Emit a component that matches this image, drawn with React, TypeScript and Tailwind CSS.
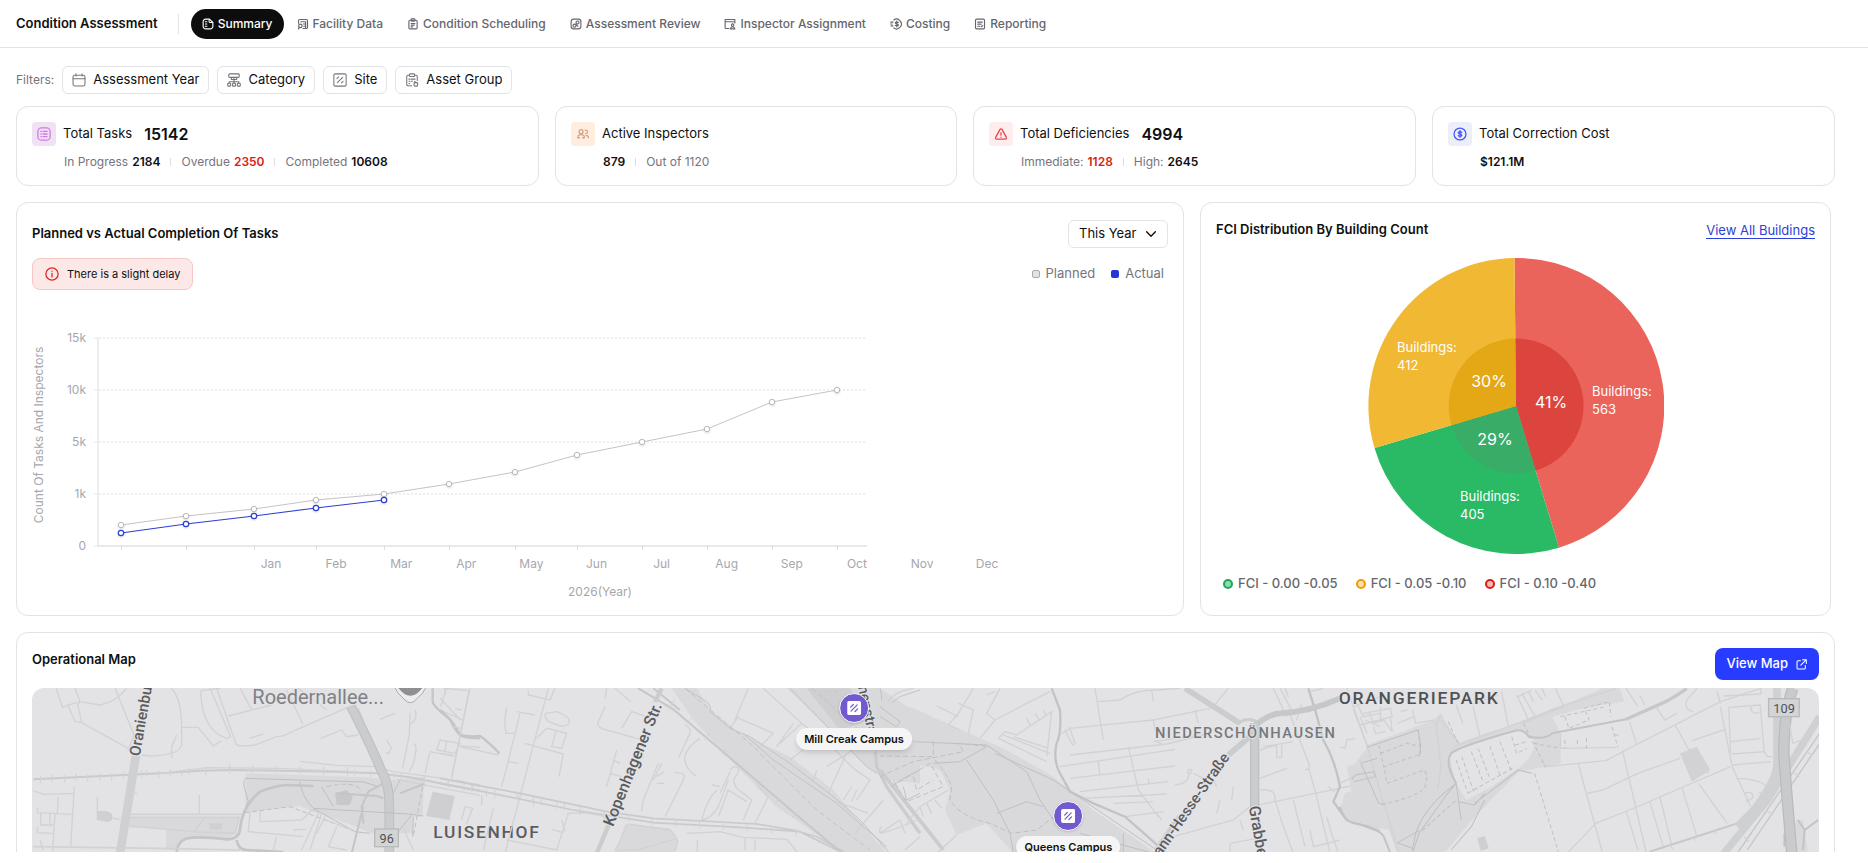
import type { ReactNode } from 'react'

type IconProps = {
    size?:      number
    weight?:    number
    className?: string
    children:   ReactNode
}

const Icon = ({ size = 12, weight = 1.4, className = '', children }: IconProps) => (
    <svg
        width={size}
        height={size}
        viewBox="0 0 16 16"
        fill="none"
        stroke="currentColor"
        strokeWidth={weight}
        strokeLinecap="round"
        strokeLinejoin="round"
        className={`shrink-0 ${className}`}
        aria-hidden="true"
    >
        {children}
    </svg>
)

const tabs = [
    {
        name: 'Summary',
        icon: <>
            <path d="M10 1.5H5A3.5 3.5 0 0 0 1.5 5v6A3.5 3.5 0 0 0 5 14.5h6a3.5 3.5 0 0 0 3.5-3.5V6z" />
            <path d="M9.500 2v2.500a1.500 1.500 0 0 0 1.500 1.500h3M4.500 5h2M4.500 8h2M4.500 11h2" />
        </>,
    },
    {
        name: 'Facility Data',
        icon: <>
            <path d="M2 7V3.500A1.500 1.500 0 0 1 3.500 2h9A1.500 1.500 0 0 1 14 3.500v9a1.500 1.500 0 0 1-1.500 1.500H8" />
            <circle cx="4.500" cy="10.500" r="2.300" />
            <path d="M2 14.500 3 12.500M5 5h6.500v9M8.500 8h3M9 11h2.500" />
        </>,
    },
    {
        name: 'Condition Scheduling',
        icon: <>
            <rect x="2.500" y="3" width="11" height="11.500" rx="1.500" />
            <rect x="5.500" y="1.200" width="5" height="3" rx="1" />
            <path d="M5.500 7.500h5M5.500 9.700h4M5.500 11.900h2" />
        </>,
    },
    {
        name: 'Assessment Review',
        icon: <>
            <rect x="1.500" y="1.500" width="13" height="13" rx="3.500" />
            <circle cx="10" cy="6" r="2" />
            <circle cx="6" cy="10.200" r="2" />
            <path d="m7.500 8.700 1.200-1.200M10.500 11 8.500 9" />
        </>,
    },
    {
        name: 'Inspector Assignment',
        icon: <>
            <path d="M6.500 14H2.500A1 1 0 0 1 1.500 13V2h13v4.500M1.500 5h13" />
            <circle cx="11.500" cy="9.500" r="1.600" />
            <path d="M8.500 14.500c.3-2 1.500-2.800 3-2.800s2.700.8 3 2.800z" />
        </>,
    },
    {
        name: 'Costing',
        icon: <>
            <path d="M5 2.600a6.500 6.500 0 1 1 0 10.800M1 5.500h3M.8 8h2M1.500 10.500h2.500" />
            <path d="M11 6.200c-.3-.7-1-1-1.900-1-1.100 0-1.900.5-1.900 1.400 0 1.900 4 .9 4 2.800 0 .9-.8 1.400-2 1.400-1 0-1.800-.4-2.100-1.100M9.100 4.200v7.600" />
        </>,
    },
    {
        name: 'Reporting',
        icon: <>
            <rect x="2" y="1.500" width="12" height="13" rx="1.500" />
            <path d="M5 5.500h6M5 8.200h4.500M5 11h2.500M9.500 10.800l.8.800 1.400-1.600" />
        </>,
    },
]

const filters = [
    {
        name: 'Assessment Year',
        icon: <>
            <rect x="1.200" y="2.500" width="13.600" height="12.300" rx="2" />
            <path d="M1.200 6.500h13.600M4.500 1v2.500M11.500 1v2.500" />
        </>,
    },
    {
        name: 'Category',
        icon: <>
            <rect x="2" y="1" width="12" height="4" rx="1" />
            <rect x=".8" y="11.800" width="3.400" height="3.200" rx=".8" />
            <rect x="6.300" y="11.800" width="3.400" height="3.200" rx=".8" />
            <rect x="11.800" y="11.800" width="3.400" height="3.200" rx=".8" />
            <path d="M8 5v6.800M2.500 11.800V10h11v1.800M5 5.500v2h6v-2" />
        </>,
    },
    {
        name: 'Site',
        icon: <>
            <rect x="1" y="1" width="14" height="14" rx="1.500" />
            <path d="m4.500 6.500 2-2M5 11l6-6M9.500 11.500l2-2" />
        </>,
    },
    {
        name: 'Asset Group',
        icon: <>
            <path d="M7.500 14.500h-4A1.500 1.500 0 0 1 2 13V4a1.500 1.500 0 0 1 1.500-1.500H5M11 2.500h1.500A1.500 1.500 0 0 1 14 4v4.500" />
            <rect x="5" y="1" width="6" height="3" rx="1" />
            <rect x="10.300" y="11" width="4.200" height="4" rx="1" />
            <path d="M4.500 7h1M7 7h4.500M4.500 9.500h1M7 9.500h1.500M4.500 12h1M11 9.500l1.500 1.500" />
        </>,
    },
]

type Detail = { label?: string; value?: string; alert?: boolean }

type StatProps = {
    title:    string
    total?:   string
    tone:     string
    icon:     ReactNode
    details:  Detail[]
}

const stats: StatProps[] = [
    {
        title: 'Total Tasks',
        total: '15142',
        tone: 'bg-[#f1e1f5] text-[#cf7be6]',
        icon: <>
            <rect x="1" y="1" width="14" height="14" rx="4" />
            <path d="M4.500 5h.5M7 5h4.500M4.500 8h.5M7 8h4.500M4.500 11h.5M7 11h4.500" />
        </>,
        details: [
            { label: 'In Progress', value: '2184' },
            { label: 'Overdue', value: '2350', alert: true },
            { label: 'Completed', value: '10608' },
        ],
    },
    {
        title: 'Active Inspectors',
        tone: 'bg-[#ffeee0] text-[#dda283]',
        icon: <>
            <circle cx="5.800" cy="5.300" r="2.200" />
            <path d="M2 12.300c0-2.300 1.600-3.500 3.800-3.500s3.800 1.200 3.800 3.500H7.500M2 12.300h2M10.500 3.800a1.900 1.900 0 1 1 .7 3.600M11.500 9.500c1.600.2 2.700 1.200 2.700 2.800" />
        </>,
        details: [{ value: '879' }, { label: 'Out of 1120' }],
    },
    {
        title: 'Total Deficiencies',
        total: '4994',
        tone: 'bg-[#ffecec] text-[#e5484d]',
        icon: <>
            <path d="M6.900 2.700 1.900 11.800a1.300 1.300 0 0 0 1.100 2h10a1.300 1.300 0 0 0 1.100-2L9.100 2.700a1.300 1.300 0 0 0-2.200 0z" />
            <path d="M8 6.500v2.800M8 11.500v.1" />
        </>,
        details: [
            { label: 'Immediate:', value: '1128', alert: true },
            { label: 'High:', value: '2645' },
        ],
    },
    {
        title: 'Total Correction Cost',
        tone: 'bg-[#eceef8] text-[#4557ff]',
        icon: <>
            <circle cx="8" cy="8" r="6.800" />
            <path d="M10 6.300c-.3-.7-1.100-1-2-1-1.100 0-2 .5-2 1.300 0 1.800 4 1 4 2.800 0 .8-.9 1.300-2 1.300-.9 0-1.700-.4-2-1M8 4.300v7.400" />
        </>,
        details: [{ value: '$121.1M' }],
    },
]

const StatCard = ({ title, total, tone, icon, details }: StatProps) => (
    <div className="h-20 rounded-xl border border-[#e2e3e7] px-[15px] pt-[15px]">
        <div className="flex h-6 items-center">
            <span className={`mr-[7px] flex size-6 items-center justify-center rounded ${tone}`}>
                <Icon size={14} weight={1.500}>{icon}</Icon>
            </span>
            <span className="text-[13px]">{title}</span>
            {total && <span className="ml-3 text-base font-semibold">{total}</span>}
        </div>
        <div className="mt-2 flex h-4 items-center pl-8 text-xs">
            {details.map((item, i) => (
                <div key={i} className="flex items-center">
                    {i > 0 && <span className="mx-2.5 h-2 w-px bg-[#dcdde1]" />}
                    {item.label && <span className="text-[#74757d]">{item.label}</span>}
                    {item.value && (
                        <span className={`font-semibold ${item.label ? 'ml-1' : ''} ${item.alert ? 'text-[#dc1c13]' : ''}`}>
                            {item.value}
                        </span>
                    )}
                </div>
            ))}
        </div>
    </div>
)

const planned = [
    [89, 225], [154, 216], [222, 209], [284, 200], [352, 194], [417, 184],
    [483, 172], [545, 155], [610, 142], [675, 129], [740, 102], [805, 90],
]
const actual = [[89, 233], [154, 224], [222, 216], [284, 208], [352, 200]]
const months = ['Jan', 'Feb', 'Mar', 'Apr', 'May', 'Jun', 'Jul', 'Aug', 'Sep', 'Oct', 'Nov', 'Dec']
const levels = ['15k', '10k', '5k', '1k', '0']

const CompletionChart = () => (
    <svg viewBox="0 0 1136 305" className="block w-full text-xs" fill="#a6a7ad" role="img" aria-label="Planned vs actual completion of tasks">
        {levels.map((level, i) => (
            <g key={level}>
                <text x="54" y={42 + i * 52} textAnchor="end">{level}</text>
                <path d={`M62 ${38 + i * 52}h4`} stroke="#e4e5e9" />
                {i < 4 && <path d={`M67 ${38 + i * 52}H835`} stroke="#e9e9ec" strokeWidth="1.500" strokeDasharray="2 2" />}
            </g>
        ))}
        <path d="M66 37.500V246" stroke="#e9e9ec" strokeWidth="1.500" />
        <path d="M65 246H835" stroke="#e9e9ec" strokeWidth="2" />
        {planned.map(([x]) => <path key={x} d={`M${x + 0.500} 246v4`} stroke="#dcdde1" />)}
        <text x="8" y="135" textAnchor="middle" transform="rotate(-90 8 135)" dominantBaseline="middle">Count Of Tasks And Inspectors</text>
        {months.map((month, i) => (
            <text key={month} x={239 + i * 65.100} y="268" textAnchor="middle">{month}</text>
        ))}
        <text x="568" y="296" textAnchor="middle">2026(Year)</text>
        <polyline points={planned.join(' ')} fill="none" stroke="#c4c4c7" />
        <polyline points={actual.join(' ')} fill="none" stroke="#2d3ed6" strokeWidth="1.200" />
        {planned.map(([x, y]) => (
            <circle key={x} cx={x} cy={y} r="2.700" fill="white" stroke="#b9b9bd" className="drop-shadow-[0_1px_1px_rgba(0,0,0,0.15)]" />
        ))}
        {actual.map(([x, y]) => (
            <circle key={x} cx={x} cy={y} r="2.700" fill="white" stroke="#2d3ed6" strokeWidth="1.200" className="drop-shadow-[0_1px_1px_rgba(0,0,0,0.15)]" />
        ))}
    </svg>
)

const BuildingPie = () => (
    <svg viewBox="0 0 296 296" className="block size-[296px] text-[13px]" fill="white" role="img" aria-label="FCI distribution by building count">
        <path d="M148 148 146.500 0A148 148 0 0 1 191 289.700z" fill="#ea645b" />
        <path d="M148 148 191 289.700A148 148 0 0 1 6.500 190z" fill="#2aba66" />
        <path d="M148 148 6.500 190A148 148 0 0 1 146.500 0z" fill="#f0b833" />
        <path d="M148 148 147.300 80.500A67.500 67.500 0 0 1 167.600 212.600z" fill="#dc443e" />
        <path d="M148 148 167.600 212.600A67.500 67.500 0 0 1 83.500 167.200z" fill="#39ac68" />
        <path d="M148 148 83.500 167.200A67.500 67.500 0 0 1 147.300 80.500z" fill="#e4a715" />
        <text x="29" y="94">Buildings:</text>
        <text x="29" y="112">412</text>
        <text x="224" y="138">Buildings:</text>
        <text x="224" y="156">563</text>
        <text x="92" y="243">Buildings:</text>
        <text x="92" y="261">405</text>
        <g className="text-base" textAnchor="middle">
            <text x="121" y="129">30%</text>
            <text x="183" y="150">41%</text>
            <text x="127" y="187">29%</text>
        </g>
    </svg>
)

const ranges = [
    { name: 'FCI - 0.00 -0.05', dot: 'border-[#22a55a] bg-[#86e0ad]' },
    { name: 'FCI - 0.05 -0.10', dot: 'border-[#f09a0c] bg-[#ffe1a3]' },
    { name: 'FCI - 0.10 -0.40', dot: 'border-[#dc1c13] bg-[#f9b9b6]' },
]

// Greyscale street map. Each tile is drawn on its own grid, three units to a pixel.
const StreetMap = () => (
    <svg viewBox="0 0 1787 400" preserveAspectRatio="xMidYMin slice" className="block h-full w-full" fill="none" stroke="#d2d2d5" strokeWidth="4" aria-hidden="true">
        {/* west */}
        <g transform="translate(-32 -68) scale(.33333)">
            <g fill="#d9d9db" stroke="none">
                <path d="M738 460 1100 472 1180 480 1272 470 1268 590 1240 590 1238 640 1115 640 1040 610 930 570 900 558 735 578z" />
                <path d="M388 592 718 592 705 640 680 660 560 650 528 690 498 690V628L385 622z" />
                <path d="M1298 515 1365 528 1348 600 1278 588z" fill="#cfcfd1" />
                <path d="M1005 520 1040 510 1058 530 1050 555 1010 555z" fill="#c8c8ca" />
                <path d="M290 573h28q20 5 20 18t-18 15l-30-6zM628 610h38v18h-38z" fill="#d0d0d3" />
            </g>
            <path d="M168 205 188 262 205 255 240 245 300 255Q350 245 380 205M225 205 240 245 233 255 245 305M205 258 225 305 245 308 385 385M345 205 402 345 385 390" />
            <path d="M515 205Q545 240 545 320V375Q540 405 450 408L425 405M545 322H595L640 378 665 362M530 345 515 380V415M602 212 660 205M602 212Q605 330 680 355L692 350 630 205" />
            <path d="M650 205 708 372Q715 382 765 375L830 350Q850 350 870 338L1048 260M685 288 815 255M720 205 755 268M860 210 908 312M895 205 980 270M748 355 790 342" />
            <path d="M962 355 1025 330 1040 350 1075 345M1140 298 1185 280M1090 300 1075 265M1160 360 1175 385 1160 402 1170 398M1230 280 1228 345 1208 445M1245 270Q1255 300 1230 312M1240 372Q1256 375 1240 430L1228 455" />
            <path d="M1340 205 1322 260M1410 205 1355 470M1320 360 1380 370 1365 400 1310 390zM1340 362 1335 395M1290 395 1275 460M1290 395 1365 410M1322 270 1388 300M1380 378 1440 382M1370 480 1440 500" />
            <path d="M1298 205V245Q1300 260 1350 298 1370 345 1390 350T1440 355" stroke="#c4c5c7" strokeWidth="7" />
            <path d="M100 478 370 465 480 460 600 452 700 450 1000 455 1130 460 1230 472 1320 490 1440 512" stroke="#c9cacc" strokeWidth="6" />
            <path d="M480 460 620 443 840 445 1060 455M900 424 1010 436 1130 440 1180 455 1330 475 1440 495M1190 478 1300 500 1440 526" />
            <path d="M122 468V490M157 463V486M194 465V488M229 460V483M263 463V485M300 459V482M335 460V483M371 455V477M425 450V472M440 450V470M477 453V474M511 447V468M546 450V470M567 445V466M617 443V466M689 432V462M759 435V460M830 437V460M900 437V463M971 440V467M1042 442V467M1064 446V468M1112 450V475M1182 460V478M1202 460V480M1273 465V500M1345 478V502M1418 490V512" strokeWidth="3" />
            <path d="M1052 258Q1120 390 1145 455 1168 490 1168 560V700" stroke="#bdbec0" strokeWidth="29" />
            <path d="M1052 258Q1120 390 1145 455 1168 490 1168 560V700" stroke="#cbccce" strokeWidth="23" />
            <path d="M408 405 370 640 360 700" stroke="#cfd0d2" strokeWidth="26" />
            <path d="M735 478Q728 485 735 510L745 545 730 578M735 475 1090 486 1130 498M900 485Q905 530 940 565L1065 635 1110 640M965 500 1000 560M1180 520 1200 480M940 565 1240 583 1270 588M1235 585 1190 640M1240 590 1238 650" stroke="#bebfc1" strokeWidth="3" />
            <path d="M735 578 870 560 1060 632M980 500Q1060 480 1085 512M1268 500 1240 648" stroke="#bebfc1" strokeWidth="3" strokeDasharray="14 8" />
            <path d="M530 700Q530 668 560 655 600 648 680 658 715 658 720 630 725 560 780 515 820 498 860 495L940 498M710 660Q715 690 740 690L850 696" stroke="#c4c5c7" strokeWidth="8" />
            <path d="M1010 520 1130 528 1150 535M1150 490 1105 515 1085 560 1090 610M1200 520 1272 492M1055 700 1090 560" stroke="#c4c5c7" strokeWidth="6" />
            <path d="M388 583 725 583M388 592 718 592 705 640 590 636 560 633 388 618M610 598 582 635M100 680 530 686 720 690" strokeWidth="5" />
            <path d="M100 512 130 523 220 520M223 500 212 680M175 530 172 580M112 563V578L215 583M122 580V615H160M150 580V620M112 620V638L158 640M165 580 158 695M120 660 130 690M292 530V575M340 595 362 598M598 525V580M412 520H400" />
            <path d="M750 575 745 635 910 650M780 572V605L905 600 935 570 965 580 930 690M955 580 905 690M880 630 920 628M975 590 950 640M980 600 1055 630M830 650 820 690M1010 620 985 680 1040 690M1385 600 1395 560 1418 565 1400 612M1210 625 1240 690" />
            <g fill="#5b5c5f" stroke="#e3e3e5" strokeWidth="6" paintOrder="stroke" className="font-[Roboto]">
                <text x="757" y="252" fontSize="60" fill="#808184">Roedernallee...</text>
                <text x="419" y="410" fontSize="46" fontWeight="500" transform="rotate(-80 419 410)">Oranienburger Str.</text>
                <text x="1300" y="653" fontSize="52" fontWeight="500" className="tracking-widest">LUISENHOF</text>
            </g>
            <path d="M1180 195Q1190 220 1215 240 1231 256 1247 240 1272 220 1282 195z" fill="#ececee" stroke="#a9aaac" strokeWidth="3" />
            <path d="M1192 200Q1231 255 1270 200z" fill="#8e8f92" stroke="none" />
            <rect x="1124" y="627" width="71" height="53" fill="#d3d4d6" stroke="#b9babc" />
            <text x="1160" y="668" fontSize="38" textAnchor="middle" fill="#505154" stroke="none" className="font-[Roboto]">96</text>
        </g>
        {/* centre west */}
        <g transform="translate(408 -68) scale(.33333)">
            <g fill="#d9d9db" stroke="none">
                <path d="M695 205 770 205 810 270 900 340 1050 410 1180 510 1340 700H1210L1140 650 1010 560 900 450 760 300z" />
                <path d="M1040 205H1320L1440 285V490L1340 480 1280 440 1180 340z" />
                <path d="M555 612 690 625 712 660 705 700H525z" />
                <path d="M1100 205H1230L1290 300 1200 330z" fill="#cfcfd1" />
                <path d="M1320 205 1440 260V205z" fill="#e3e3e5" />
            </g>
            <path d="M0 270Q40 300 60 345 90 352 120 348 145 365 178 400" stroke="#c4c5c7" strokeWidth="7" />
            <path d="M10 205 87 212 35 475M0 235 62 300M45 265 65 270M60 380 175 405M15 205V225M0 400 40 405M40 320 65 325" />
            <path d="M325 205 195 700M265 212V225L330 240 345 205M240 280 208 410 185 500M200 262Q190 300 198 340H222M230 275 285 285M205 425 235 430M255 370 370 402 357 470M290 355 320 325 380 340 365 385 335 380 348 335M318 280 350 275Q390 290 388 305T360 318L325 305Q310 290 318 280" />
            <path d="M500 205 495 235M495 260 473 310Q475 325 500 330L600 358M525 205 572 245M545 325 575 275 620 290M530 390 500 500M520 420 540 430M512 460 545 470M655 430 610 540 605 575M650 470 672 455M650 490 672 490M665 430 640 480M705 458Q740 455 730 480L675 590M735 315Q760 325 745 350L715 415M780 355Q740 380 735 410 730 440 768 468" />
            <path d="M815 495 840 500M870 450 880 440Q905 440 890 465L880 480 890 505 935 540 910 600M865 480 835 560Q810 600 785 600 800 540 830 510M955 480V500L985 530 945 610M835 590 865 510 920 545M870 455 840 520" />
            <path d="M885 300 925 205M890 292 1000 340 955 385M970 205 1085 310 1020 370M1060 310 1010 380M870 325 895 290M1085 310 1130 345M1140 350 1050 420M1130 450 1120 480M1165 370 1240 445M1160 440 1270 370M1220 400 1165 520M1240 445 1290 480 1250 540M1190 545 1285 580M1235 500 1210 540M1250 510 1235 545M1330 540 1245 640M1325 620Q1310 640 1330 638 1390 620 1430 600M1395 690 1440 650" />
            <path d="M0 475 240 520 500 575 640 595 950 612 1060 630 1130 650 1220 700M0 490 130 515 400 570 640 608 900 622 1080 635 1210 700" stroke="#c9cacc" strokeWidth="5" />
            <path d="M24 475V498M72 492V515M95 495V515M139 507V530M164 510V535M232 513V535M280 530V560M303 537V558M351 545V568M373 545V570M419 560V585M493 575V600M568 582V605M637 592V615M708 598V622M779 602V625M850 607V630M921 613V635M994 617V640M1068 625V648M1150 650 1135 668M1190 665 1172 685" strokeWidth="3" />
            <path d="M595 205 700 268 860 405 1070 585 1200 695M640 205 720 270" stroke="#c6c7c9" strokeWidth="6" />
            <path d="M665 220 640 250M705 238 685 270M756 292 738 312M808 340 793 360M860 387 846 405M914 433 898 452M966 482 952 500M1020 530 1006 550M1072 575 1057 594M1125 632 1112 652" strokeWidth="3" />
            <path d="M735 205 800 245Q815 260 810 275L870 325 930 350 1050 430 1180 530 1260 600 1350 700M910 340 1000 420 1190 550 1340 680M1050 205 1280 440 1310 460" stroke="#c2c3c5" strokeWidth="3" />
            <path d="M735 205 930 370 1130 570 1290 690M1115 205 1280 350M1320 430 1345 405 1440 415M1320 470 1440 420M1185 210 1240 260" stroke="#c2c3c5" strokeWidth="3" strokeDasharray="16 9" />
            <path d="M1300 330 1310 440 1340 500 1440 640" stroke="#cbccce" strokeWidth="10" />
            <path d="M1320 205Q1330 240 1320 260L1385 300Q1380 320 1350 325M1320 290 1440 285M1330 270 1380 230 1440 210M1360 480 1380 520M1350 500 1400 470 1440 450M1390 500 1400 540 1440 520" stroke="#c2c3c5" strokeWidth="3" />
            <path d="M665 205 645 245M508 610 470 700" stroke="#cbccce" strokeWidth="13" />
            <path d="M565 612 690 630Q715 655 712 670L705 692M525 692 562 615M525 692 600 688 710 655M740 640 840 635 910 652 1040 658 1075 700M772 660V700M915 655V690M945 658V690M125 525V555M200 660 350 690 385 580 430 578 500 590M335 628 370 638M160 565 130 690M365 600 375 635" />
            <g fill="#5b5c5f" stroke="#e3e3e5" strokeWidth="6" paintOrder="stroke" className="font-[Roboto]">
                <text x="519" y="622" fontSize="48" fontWeight="500" transform="rotate(-68 519 622)">Kopenhagener Str.</text>
                <text x="1254" y="200" fontSize="44" fontWeight="500" transform="rotate(78 1254 200)">nenstraße</text>
            </g>
        </g>
        {/* centre east */}
        <g transform="translate(848 -68) scale(.33333)">
            <g fill="#d9d9db" stroke="none">
                <path d="M0 240 100 265 380 390 520 470 640 570 830 700H400L320 610 230 645 195 570 210 510 180 450 100 430 20 470 0 450z" />
                <path d="M1460 385 1500 380V630L1420 610 1380 570 1395 520 1425 510 1410 450z" />
            </g>
            <path d="M25 245Q40 215 100 205M205 315 235 280 280 205M205 315 240 330M170 258 235 290M235 250 280 270 265 340M300 355 345 300 320 280 360 205M345 300 440 250 510 215M355 355 375 335 410 345 515 275 500 410M355 355 500 425M370 345 510 400M400 350 505 385M440 295 450 315M465 280 478 300M490 270 498 290M320 225 345 215" />
            <path d="M645 205 670 360M655 245 720 240Q760 210 830 210L900 205M815 210 820 245M545 340 570 325 820 300 990 265M555 330 578 375 585 370 568 320M820 300 825 330M945 270 955 310M1045 205 1000 260M820 365 1000 340M570 405 860 372 990 340M540 440 885 388M570 475 885 438M600 515 865 485M610 535 860 522M745 380 775 510 835 590M655 425 660 470M850 375 830 365M805 475 808 495M700 550 820 545M735 590 850 575M830 580 845 600" />
            <path d="M885 495Q930 490 925 460 920 445 935 450 935 465 925 460M940 460 970 475M880 650 1060 600 1110 560 1500 480M1000 480 1010 500M1060 500 1055 540M1020 540 1010 580M1050 670V700M1050 670 1130 655M1080 600 1090 630M1140 390 1190 375V412H1205V375M1150 380 1240 365M1140 475 1220 445M1140 510Q1190 505 1185 540L1210 620 1240 700M1285 440 1310 530 1350 700M1275 450 1290 445M1240 540 1275 680M1345 500 1365 515M1340 590 1355 640 1375 700M1290 630 1300 680 1380 660" />
            <path d="M1180 205 1220 290M1200 205 1240 280M1215 205 1225 230M1225 270 1290 440M1250 300 1265 250M1290 215 1330 205M1400 205 1470 400M1420 260 1500 230M1430 250 1450 290 1500 280M1455 300 1500 320M1420 455 1500 420M1425 480 1500 455M1440 420 1460 540" />
            <path d="M515 205 540 270Q545 340 530 370 518 420 540 460L570 515 640 550 735 590 860 700M1285 205Q1310 280 1330 360 1365 420 1380 500L1360 545 1400 600Q1430 610 1500 635" stroke="#c2c3c5" strokeWidth="7" />
            <path d="M915 205 1080 310" stroke="#cbccce" strokeWidth="17" />
            <path d="M1120 320Q1170 280 1200 280 1290 275 1380 235" stroke="#c6c7c9" strokeWidth="17" />
            <path d="M1075 310Q1100 290 1130 305" stroke="#cbccce" strokeWidth="9" />
            <path d="M1045 405 1115 345M830 690 900 590" stroke="#cbccce" strokeWidth="17" />
            <path d="M1124 310V560" stroke="#bdbec0" strokeWidth="28" />
            <path d="M1124 310V560" stroke="#cbccce" strokeWidth="21" />
            <path d="M0 450 190 690" stroke="#cbccce" strokeWidth="11" />
            <path d="M0 290 50 320 60 305 0 260M100 365 320 375 440 455 480 540 520 600M260 420 340 540 390 640 400 700M345 400 520 480 830 690M350 580 440 545 490 560M160 430 240 425 320 380M600 640 820 700M730 640V700" stroke="#bfc0c2" strokeWidth="3" />
            <path d="M160 365V410L0 408M165 420Q200 460 215 500L210 540Q240 590 330 610L395 640 470 630 560 560M0 470 100 425 250 395 235 370 330 380M35 500 150 430 190 500 80 545 45 490M100 470 110 510 160 480" stroke="#bfc0c2" strokeWidth="3" strokeDasharray="16 8" />
            <path d="M80 610 120 560 205 510M0 640 60 600 75 640M120 560 130 590M140 550 155 580M165 540 185 565M0 670 30 700M230 645 170 700" />
            <g fill="#5b5c5f" stroke="#e3e3e5" strokeWidth="6" paintOrder="stroke" className="font-[Roboto]">
                <text x="825" y="353" fontSize="44" fill="#77787b" fontWeight="500" className="tracking-widest">NIEDERSCHÖNHAUSEN</text>
                <text x="1050" y="412" fontSize="45" fontWeight="500" textAnchor="end" transform="rotate(-55 1050 412)">Hermann-Hesse-Straße</text>
                <text x="1106" y="560" fontSize="48" fontWeight="500" transform="rotate(80 1106 560)">Grabbeallee</text>
            </g>
        </g>
        {/* east */}
        <g transform="translate(1308 -68) scale(.33667 .33333)">
            <g fill="#d9d9db" stroke="none">
                <path d="M80 375 280 300 300 280 350 370 430 340 500 320 580 290 620 270 700 240 780 205H830L845 245 740 260 630 290 655 340V430L610 440 530 455 400 590 310 700H170L145 630 20 600 10 560 42 555 20 440 80 420z" />
                <path d="M1010 400 1060 380 1100 450 1045 485z" fill="#d2d2d4" />
                <path d="M408 655 430 648 442 685 418 692z" fill="#cfcfd1" />
                <path d="M1355 600 1375 600 1390 700H1340z" />
            </g>
            <path d="M325 410Q350 380 520 330 550 325 560 350L578 360 575 385Q560 430 520 450L450 500 375 540 345 490z" fill="#e3e3e5" stroke="none" />
            <path d="M345 490Q310 430 330 400 350 380 520 332 545 325 560 350 610 360 630 340L680 330 850 298" stroke="#c2c3c5" strokeWidth="6" />
            <path d="M850 298 960 248Q990 235 1030 205" stroke="#c6c7c9" strokeWidth="10" />
            <path d="M340 380 540 305 640 265 820 205M655 385 820 382M655 340V385M600 420 608 440 790 422 840 395 1130 245 1250 205M708 432 780 700M735 520 780 510 885 460 1010 415M840 395 910 700M675 700 760 610 860 570 1160 440M850 575 885 690M920 545 960 680M950 530 985 675M1015 500 1060 650M1065 490 1150 610M995 315 1045 405M1045 362 1140 330M860 305 880 370M940 262 965 300 1000 280M1130 262 1165 440 1220 560M1030 400 1095 460" />
            <path d="M1155 262 1248 255 1260 395 1165 402M1155 262 1160 400M1160 365 1250 355M1220 260Q1220 285 1245 278M1165 435 1280 425M1175 475Q1240 475 1270 500M1260 395 1270 410H1285M1060 205 1030 240Q1020 270 1050 275M1120 215 1130 250M1200 520Q1230 510 1225 535L1205 545M1250 205V222L1140 228" />
            <path d="M525 225 560 300M540 220 580 290M525 232 570 210M560 215 575 245M580 210 600 240M600 205 610 230M640 205 665 260 540 310M300 300 355 370M345 255 365 310M395 260 415 345M480 215 500 320M300 285 285 310 300 440 290 510M850 205 885 260M890 225 905 255M470 225 390 255" />
            <path d="M0 380 15 385 20 360 45 355M40 270 80 375 130 550 175 700M60 315 155 290 150 265 70 280M85 275 100 310M60 290 80 340M215 270 225 310 280 300M170 310 220 290M180 275 200 270M95 310 130 300 155 335 150 295M100 320 105 340 135 335M120 262V300M0 490 40 470" />
            <path d="M80 382 232 330 240 380 235 410M62 430 115 550 130 553M62 430 110 415M35 480 45 465 100 455 105 470 40 485M215 700 235 640 320 520 345 490 360 600M345 490Q250 560 225 640L215 690M400 550 530 450 570 460M350 545 400 555 430 520M170 668 235 632M170 668 215 685M330 690 390 620 430 540" stroke="#bfc0c2" strokeWidth="3" />
            <path d="M232 330 240 402 130 440 140 490 250 450Q265 470 250 505 230 530 120 555M115 375 130 440M120 400 200 370 240 380M345 420 380 520M362 410 397 515M390 395 425 485M410 385 445 475M445 378 475 465M475 365 510 455M380 520 520 440M510 350 525 400 555 385M520 375 555 365M575 370 655 385M545 310 610 440M668 290 680 325 740 300 725 265 800 245 805 290M655 290 790 260M668 360V385M705 360V380M732 355V385M808 320 825 382M815 345H830M245 632 345 540M578 460 650 700M322 305 350 370" stroke="#bfc0c2" strokeWidth="3" strokeDasharray="12 8" />
            <path d="M920 695 1180 610 1220 570 1280 500" stroke="#c6c7c9" strokeWidth="6" />
            <path d="M0 560Q10 600 40 610 110 620 130 650L150 700M1420 600 1380 630 1360 600M1380 630 1375 690M1320 640V680" stroke="#c2c3c5" strokeWidth="6" />
            <path d="M1425 290 1270 540 1140 700" stroke="#cfd0d2" strokeWidth="22" />
            <path d="M1425 340 1180 700M1425 370 1210 690" stroke="#c4c5c7" strokeWidth="4" />
            <path d="M1245 515 1262 540M1280 480 1300 500M1345 455 1365 470M1385 395 1402 405M1265 570 1285 585M1200 650 1215 665M1115 630V642M1047 650 1055 662M980 670 988 688" strokeWidth="4" />
            <path d="M1298 205V440Q1290 490 1230 570L1180 620" stroke="#cfd0d2" strokeWidth="23" />
            <path d="M1345 205Q1320 270 1318 400 1330 560 1342 700" stroke="#b9babc" strokeWidth="34" />
            <path d="M1345 205Q1320 270 1318 400 1330 560 1342 700" stroke="#c9cacb" strokeWidth="27" />
            <path d="M1345 370 1370 360 1400 330M1335 310 1345 370" />
            <text x="-4" y="252" fontSize="52" fontWeight="500" fill="#505154" stroke="#e3e3e5" strokeWidth="6" paintOrder="stroke" className="font-[Roboto] tracking-widest">ORANGERIEPARK</text>
            <rect x="1273" y="236" width="91" height="54" fill="#d3d4d6" stroke="#b9babc" />
            <text x="1319" y="279" fontSize="38" textAnchor="middle" fill="#505154" stroke="none" className="font-[Roboto]">109</text>
        </g>
    </svg>
)

const campuses = [
    { name: 'Mill Creak Campus', place: 'left-[46%] top-[5px]' },
    { name: 'Queens Campus', place: 'left-[58%] top-[113px]' },
]

const App = () => {
    return (
        <div className="flex h-screen flex-col bg-white pb-[11px] font-['Inter',sans-serif] text-[#0f0f10] antialiased">
            <header className="flex h-12 shrink-0 items-center border-b border-[#e2e3e7] px-4">
                <h1 className="text-[13px] font-semibold">Condition Assessment</h1>
                <span className="ml-5 mr-3 h-5 w-px bg-[#e2e3e7]" />
                <nav className="flex items-center gap-0.5">
                    {tabs.map((tab, i) => (
                        <a
                            key={tab.name}
                            href="#"
                            className={`flex h-[30px] items-center gap-1 rounded-full px-[11px] text-xs font-medium ${i === 0 ? 'bg-[#0d0d0d] text-white' : 'text-[#65666d]'}`}
                        >
                            <Icon weight={1.500}>{tab.icon}</Icon>
                            {tab.name}
                        </a>
                    ))}
                </nav>
            </header>

            <main className="min-h-0 flex-1 overflow-hidden pl-4 pr-[33px] pt-[18px]">
                <div className="mb-3 flex items-center gap-2">
                    <span className="text-xs text-[#74757d]">Filters:</span>
                    {filters.map((filter) => (
                        <button key={filter.name} type="button" className="flex h-7 items-center gap-[7px] rounded-md border border-[#e2e3e7] px-[9px] text-[13px]">
                            <Icon size={14} weight={1.200} className="text-[#74757d]">{filter.icon}</Icon>
                            {filter.name}
                        </button>
                    ))}
                </div>

                <section className="mb-4 grid grid-cols-[523fr_402fr_443fr_403fr] gap-4">
                    {stats.map((stat) => <StatCard key={stat.title} {...stat} />)}
                </section>

                <section className="mb-4 grid grid-cols-[1168fr_631fr] gap-4 pr-1">
                    <div className="h-[414px] rounded-xl border border-[#e2e3e7] px-[15px] pt-[17px]">
                        <div className="flex h-7 items-center justify-between">
                            <h2 className="text-[13px] font-semibold">Planned vs Actual Completion Of Tasks</h2>
                            <div className="relative">
                                <select aria-label="Period" className="h-7 w-[100px] appearance-none rounded-md border border-[#e2e3e7] bg-white pl-2.5 text-[13px]">
                                    <option>This Year</option>
                                    <option>Last Year</option>
                                </select>
                                <Icon size={14} weight={1.600} className="pointer-events-none absolute right-2.5 top-[7px]"><path d="m3 5.500 5 5 5-5" /></Icon>
                            </div>
                        </div>
                        <div className="mt-2.5 flex h-8 items-center justify-between">
                            <div className="flex h-8 items-center gap-2 rounded-lg border border-[#f5c8c5] bg-[#fbe8e7] px-3 text-[11px]">
                                <Icon size={14} weight={1.500} className="text-[#dc2c22]">
                                    <circle cx="8" cy="8" r="7" />
                                    <path d="M8 7.300v4M8 4.800v.1" />
                                </Icon>
                                There is a slight delay
                            </div>
                            <div className="flex items-center gap-4 pr-1 text-[13px] text-[#74757d]">
                                <span className="flex items-center gap-1.5">
                                    <span className="size-2 rounded-xs border border-[#a9aab0] bg-[#e2e3e7]" />
                                    Planned
                                </span>
                                <span className="flex items-center gap-1.5">
                                    <span className="size-2 rounded-xs bg-[#2537d4]" />
                                    Actual
                                </span>
                            </div>
                        </div>
                        <div className="mt-2.5">
                            <CompletionChart />
                        </div>
                    </div>

                    <div className="flex h-[414px] flex-col rounded-xl border border-[#e2e3e7] px-[15px] pt-[15px]">
                        <div className="flex h-6 items-center justify-between">
                            <h2 className="text-[13px] font-semibold">FCI Distribution By Building Count</h2>
                            <a href="#" className="border-b border-[#2c3fd8] text-[13px] leading-4 text-[#2c3fd8]">View All Buildings</a>
                        </div>
                        <div className="mt-4 flex justify-center">
                            <BuildingPie />
                        </div>
                        <ul className="mt-5 flex gap-[18px] pl-[7px] text-[13px] font-medium text-[#65666d]">
                            {ranges.map((range) => (
                                <li key={range.name} className="flex items-center gap-[5px]">
                                    <span className={`size-2.5 rounded-full border-2 ${range.dot}`} />
                                    {range.name}
                                </li>
                            ))}
                        </ul>
                    </div>
                </section>

                <section className="rounded-xl border border-[#e2e3e7] px-[15px] pb-4 pt-[15px]">
                    <div className="mb-2 flex justify-between">
                        <h2 className="pt-0.5 text-[13px] font-semibold">Operational Map</h2>
                        <button type="button" className="flex h-8 items-center gap-2 rounded-lg bg-[#283cff] px-3 text-[13px] font-medium text-white">
                            View Map
                            <Icon size={11} weight={1.500}>
                                <path d="M6.500 2.500H3A1.500 1.500 0 0 0 1.500 4v9A1.500 1.500 0 0 0 3 14.500h9a1.500 1.500 0 0 0 1.500-1.500V9.500M9.500 1h5.500v5.500M15 1 7 9" />
                            </Icon>
                        </button>
                    </div>
                    <div className="relative h-[400px] overflow-hidden rounded-xl bg-[#e3e3e5]">
                        <StreetMap />
                        {campuses.map((campus) => (
                            <div key={campus.name} className={`absolute flex -translate-x-1/2 flex-col items-center gap-[5px] ${campus.place}`}>
                                <span className="flex size-[30px] items-center justify-center rounded-full border border-white bg-[#7359cf] shadow">
                                    <svg width="14" height="14" viewBox="0 0 16 16" aria-hidden="true">
                                        <rect width="16" height="16" rx="2" fill="white" />
                                        <path d="m4 7 3-3M4.500 11.500l7-7M9 12l3-3" stroke="#7359cf" strokeWidth="1.400" strokeLinecap="round" />
                                    </svg>
                                </span>
                                <span className="flex h-[22px] items-center whitespace-nowrap rounded-full bg-[#f5f5f6] px-2 text-[11px] font-semibold shadow-md">{campus.name}</span>
                            </div>
                        ))}
                    </div>
                </section>
            </main>
        </div>
    )
}

export default App
